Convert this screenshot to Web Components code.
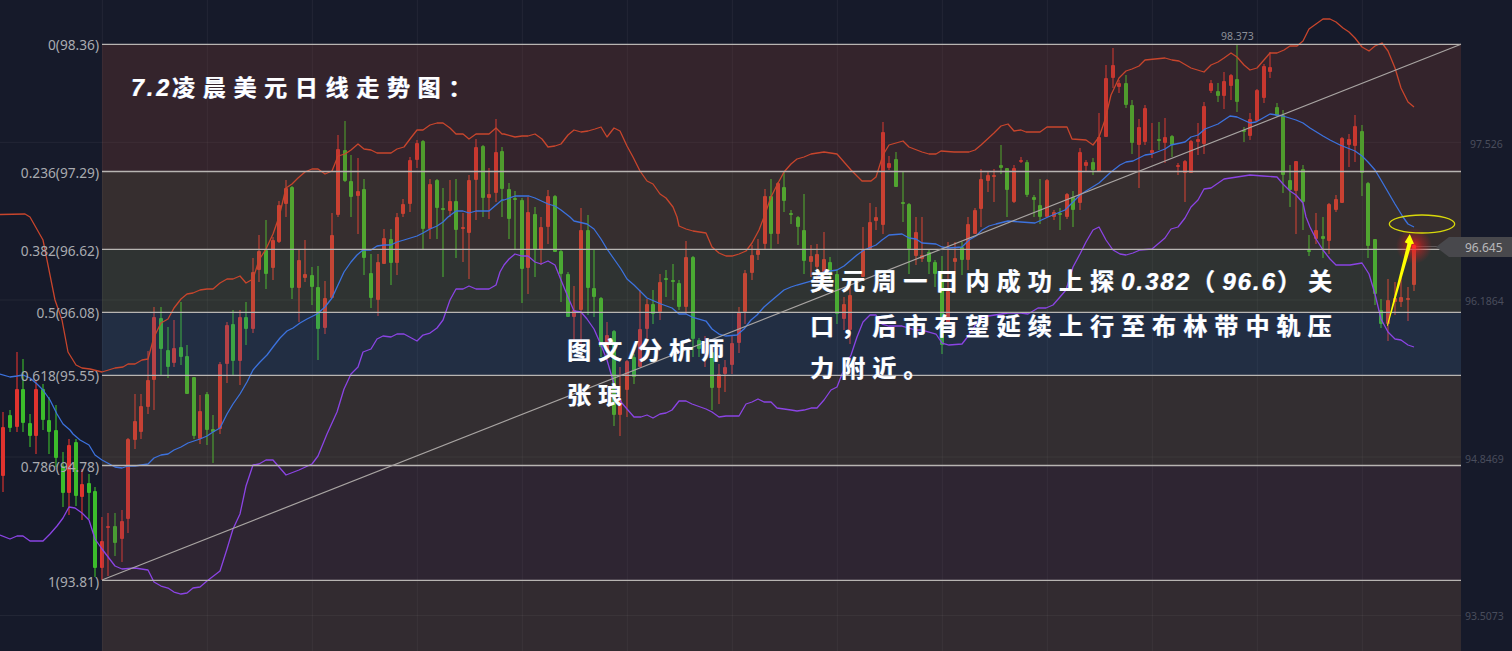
<!DOCTYPE html>
<html lang="zh">
<head>
<meta charset="utf-8">
<title>7.2凌晨美元日线走势图</title>
<style>
html,body{margin:0;padding:0;background:#161a2a;overflow:hidden}
fib-chart{--note-font:"Noto Sans CJK SC","Liberation Sans",sans-serif}
</style>
</head>
<body>
<fib-chart>
  <chart-note style="left:131px;top:65px" size="23" gap="7.7" igap="3"><i>7.2</i>凌晨美元日线走势图：</chart-note>
  <chart-note style="left:810px;top:259px">美元周一日内成功上探<i>0.382</i>（<i>96.6</i>）关<br>口，后市有望延续上行至布林带中轨压<br>力附近。</chart-note>
  <chart-note style="left:567px;top:328px">图文<i>/</i>分析师<br>张琅</chart-note>
</fib-chart>

<script>
/* candles: x, high, bodyTop, bodyBottom, low, colour (r/g) */
const CANDLES = `3,412,427,476,492,r 10,410,415,428,432,g 17,352,389,427,432,r 23,359,389,423,432,g 30,414,423,436,447,g 36,380,389,436,454,r 43,384,389,420,430,g 49,397,420,432,454,g 56,405,430,458,467,g 63,452,466,493,507,g 69,439,445,493,515,r 76,439,442,496,506,g 82,469,484,497,520,r 89,474,483,493,519,g 95,487,491,568,577,g 102,517,541,568,580,r 108,513,526,528,576,r 115,513,526,543,556,g 122,510,521,539,562,r 128,438,439,519,533,r 135,394,421,440,449,r 141,394,406,432,439,r 148,351,380,407,414,r 154,307,317,380,410,r 161,307,318,349,376,g 168,327,350,367,378,g 174,320,348,363,367,r 181,302,347,357,365,g 187,345,356,394,394,g 194,377,377,436,439,g 200,395,411,439,444,r 207,392,394,430,445,g 213,415,429,432,463,g 220,362,364,429,434,r 227,322,325,364,383,r 233,310,324,361,375,g 240,310,317,361,385,r 246,302,317,329,345,g 253,258,272,329,333,r 259,235,251,270,282,r 266,220,250,274,289,g 273,237,240,268,280,r 279,201,205,242,243,r 286,180,188,204,217,r 292,186,187,288,299,g 299,250,260,288,322,r 305,240,274,278,282,r 312,267,275,287,305,g 318,266,287,329,360,g 325,281,298,328,334,r 332,213,235,298,298,r 338,135,149,215,217,r 345,121,150,181,182,g 351,155,181,197,217,g 358,158,191,196,234,r 364,179,189,258,275,g 371,254,273,298,308,g 378,254,262,300,316,r 384,229,238,264,264,r 391,229,239,263,285,g 397,213,217,263,275,r 403,199,204,214,217,r 410,157,160,204,212,r 417,140,143,160,168,r 423,140,141,229,249,g 430,179,184,229,239,r 437,179,180,208,239,g 443,188,208,210,277,g 450,180,201,211,217,r 456,179,201,230,258,g 463,213,227,229,262,r 469,175,180,233,279,r 476,139,147,180,220,r 483,145,146,198,217,g 489,168,194,198,219,r 496,119,152,193,202,r 502,147,151,189,217,g 509,183,189,219,239,g 515,191,198,200,250,g 522,198,200,269,303,g 528,197,212,268,294,r 535,207,214,250,277,g 541,217,227,250,265,r 548,190,196,227,244,r 555,195,196,252,252,g 561,250,251,274,302,g 568,272,274,317,317,g 574,286,310,317,340,r 581,208,230,310,344,r 588,215,230,288,315,g 594,249,288,297,317,g 601,297,298,347,357,g 607,322,335,350,360,r 614,330,331,415,426,g 620,367,400,415,436,r 627,360,361,390,417,r 634,354,357,377,384,g 640,290,329,367,367,r 647,299,304,329,339,r 653,290,304,314,324,g 660,274,282,312,320,r 666,270,278,280,297,g 673,264,280,282,300,g 679,280,283,307,310,g 686,241,257,307,314,r 693,256,257,339,357,g 699,338,340,349,357,g 705,336,344,352,367,r 712,350,352,388,410,g 719,364,374,388,404,r 725,360,367,374,392,r 732,335,343,365,374,r 739,307,312,343,353,r 745,270,273,312,324,r 752,245,255,273,280,r 758,239,250,255,260,r 765,189,196,244,250,r 771,179,196,234,249,g 778,182,183,234,244,r 784,172,187,201,212,g 791,210,213,215,224,g 798,216,217,227,245,g 804,194,230,261,274,g 811,245,256,262,277,r 817,244,254,267,280,r 824,232,259,272,280,r 830,257,262,274,280,g 837,270,274,314,324,g 844,297,304,319,330,r 850,287,295,330,344,r 863,227,250,277,277,r 870,203,222,249,249,r 876,207,217,221,230,r 883,122,132,225,234,r 889,156,163,168,170,r 896,152,159,187,187,g 903,172,202,204,222,g 909,203,204,249,274,g 916,217,232,256,265,r 922,217,255,259,262,r 929,249,252,262,274,g 935,260,262,274,287,g 942,256,280,345,354,g 948,242,291,324,324,r 955,242,258,262,274,r 962,242,247,260,275,g 968,217,224,260,270,r 975,208,210,234,234,r 981,169,179,209,227,r 988,172,175,181,192,r 994,169,175,177,202,r 1001,145,165,168,174,g 1007,168,168,190,217,g 1014,165,168,202,203,r 1021,157,160,162,163,r 1027,160,162,195,197,g 1034,195,197,200,217,g 1040,179,205,217,224,g 1047,179,180,217,217,r 1054,210,212,217,220,r 1060,208,213,215,230,g 1067,193,194,217,219,r 1073,191,197,210,227,g 1080,148,152,203,210,r 1086,160,162,166,171,r 1093,158,162,170,175,g 1099,113,137,172,172,r 1106,65,78,137,137,r 1113,48,65,78,88,r 1119,80,83,87,93,r 1126,75,83,105,108,g 1132,100,105,143,154,g 1139,119,127,145,188,r 1145,105,108,142,145,r 1152,123,150,153,158,r 1159,122,139,141,150,g 1165,118,137,143,163,r 1172,135,136,145,157,g 1178,163,165,166,175,r 1185,160,161,173,202,r 1191,140,141,173,173,r 1198,123,139,142,155,r 1204,102,106,144,154,r 1211,80,83,91,93,r 1218,83,91,96,102,g 1224,72,81,96,109,r 1231,74,75,86,100,r 1237,44,79,102,112,g 1244,127,130,132,142,g 1250,113,119,136,140,r 1257,89,90,121,122,r 1264,64,66,98,103,r 1270,52,67,72,78,r 1277,103,107,116,117,g 1283,110,115,175,193,g 1290,165,180,190,207,g 1296,161,161,191,234,r 1303,165,169,202,230,g 1309,235,250,252,256,g 1316,213,230,239,244,r 1323,217,236,239,258,g 1329,203,204,241,254,r 1336,195,199,210,212,r 1342,137,138,203,203,r 1349,134,139,145,167,r 1355,115,126,146,162,r 1362,125,131,173,196,g 1368,182,183,246,258,g 1375,239,239,294,305,g 1381,299,310,324,328,g 1388,279,300,324,341,r 1395,282,298,302,315,r 1401,278,297,302,307,r 1408,287,298,300,321,r 1414,245,246,285,291,r`;

const UPPER = `0,214.5 25,214 30,217 43,240 45,250 55,300 62,320 68,352 76,365 82,368 90,369 102,372 115,368 123,367 128,364 135,364 142,360 148,359 154,337 161,323 168,319 174,308 181,299 187,294 193,293 200,290 207,289 213,289 220,283 227,279 233,279 240,276 246,283 253,279 259,260 266,249 273,234 279,217 286,188 292,184 298,178 305,172 312,169 318,169 325,174 332,171 338,156 345,154 351,150 358,144 364,149 371,150 377,153 384,153 391,153 397,149 404,147 410,139 417,130 423,130 430,125 437,123 443,123 450,128 456,134 463,134 469,139 476,134 483,134 489,134 496,128 502,134 504,134 515,137 522,136 528,136 535,134 542,139 548,147 555,146 561,144 568,135 574,130 581,132 588,131 595,129 601,127 607,137 614,128 620,131 627,146 633,157 640,171 647,181 653,184 660,194 666,198 673,207 677,217 679,226 686,229 693,231 706,233 712,247 719,253 726,256 732,256 739,254 746,251 752,243 759,230 764,217 771,197 777,185 784,172 791,164 797,159 804,157 811,154 824,152 837,154 851,170 862,181 871,181 876,177 883,155 889,145 896,143 903,141 909,147 922,152 929,154 936,154 941,151 954,152 969,152 975,150 981,145 994,133 1001,126 1008,124 1014,131 1021,130 1026,132 1040,132 1047,127 1067,127 1072,139 1086,140 1093,145 1099,137 1105,120 1111,95 1119,78 1126,71 1132,69 1139,66 1145,60 1165,58 1172,60 1179,61 1191,68 1204,72 1211,65 1218,62 1224,58 1231,53 1237,57 1244,65 1250,70 1257,68 1270,53 1277,53 1284,50 1290,46 1297,46 1303,41 1309,29 1316,24 1323,19 1330,19 1336,22 1343,28 1349,32 1355,38 1362,47 1369,51 1375,46 1382,43 1388,51 1395,68 1401,88 1408,102 1414,107`;

const MID = `0,374 10,377 17,376 23,375 30,378 37,384 43,390 50,400 57,414 63,424 70,430 73,434 80,440 89,445 95,455 102,460 115,467 122,468 128,466 135,466 148,464 154,458 161,455 168,454 174,450 181,447 188,443 200,439 207,436 213,432 220,428 227,414 233,404 240,394 247,382 253,370 260,362 267,355 273,347 280,338 287,331 293,328 300,323 307,319 317,314 325,307 332,298 338,285 344,272 351,262 357,255 363,250 371,250 377,246 384,245 391,245 397,242 404,240 417,236 423,233 430,229 437,226 443,222 448,217 456,211 463,211 469,213 476,211 489,211 496,205 502,200 504,200 515,196 529,196 535,198 548,204 555,206 561,210 570,217 574,221 587,224 594,229 601,239 607,249 614,259 621,269 627,279 634,285 641,292 647,298 654,301 661,304 672,308 679,314 686,314 692,317 706,321 712,329 719,334 726,336 737,335 744,329 751,320 757,315 764,307 771,301 784,290 791,287 797,285 811,281 824,272 837,270 844,266 857,255 864,250 876,245 882,240 889,235 902,234 909,238 916,239 922,243 936,244 942,247 949,248 962,247 969,240 976,236 982,230 989,226 996,224 1008,221 1021,222 1035,223 1048,217 1065,210 1073,202 1080,195 1086,191 1099,183 1111,172 1120,165 1126,162 1133,161 1145,155 1152,154 1165,149 1171,145 1185,142 1191,137 1198,135 1205,129 1218,124 1230,116 1237,117 1250,123 1256,122 1270,114 1283,116 1296,120 1303,123 1310,128 1323,136 1330,140 1340,145 1355,151 1362,156 1368,162 1375,170 1381,180 1388,192 1395,204 1403,217 1408,224 1414,227`;

const LOWER = `0,535 10,539 17,536 23,536 30,541 43,541 50,534 57,526 63,518 69,507 75,508 82,513 89,520 95,539 102,549 115,566 122,569 135,568 148,570 154,582 161,586 168,588 174,592 181,594 187,593 193,588 200,587 207,581 220,571 227,549 233,529 240,514 246,486 253,465 259,464 266,460 273,460 286,475 299,470 312,464 318,456 327,434 337,412 344,389 351,374 358,367 363,352 371,349 377,339 383,336 391,337 397,334 404,334 417,341 423,335 430,333 437,328 443,320 450,300 456,289 463,289 469,286 476,289 489,289 496,285 500,272 504,265 509,259 515,254 522,256 528,256 535,262 541,264 548,261 555,265 561,280 568,297 574,311 581,312 587,319 594,329 601,345 607,360 614,384 621,402 627,409 634,417 641,417 647,415 653,418 660,414 666,413 672,410 679,401 686,401 692,404 706,409 712,412 719,417 726,416 739,416 746,404 752,402 758,399 764,402 771,402 777,408 791,410 797,411 804,410 811,408 817,408 824,400 831,390 837,387 844,369 851,355 857,337 863,322 870,315 876,315 882,324 889,326 902,326 916,330 922,330 936,334 942,343 949,345 962,344 969,335 976,324 982,317 1008,313 1021,313 1028,314 1038,308 1046,308 1053,305 1060,297 1066,290 1073,267 1080,254 1086,242 1093,230 1099,227 1106,240 1113,250 1120,254 1126,255 1133,253 1140,250 1152,249 1165,238 1171,229 1178,227 1185,218 1191,207 1198,200 1204,189 1211,188 1224,179 1237,177 1250,175 1263,176 1277,177 1283,184 1290,191 1296,195 1303,203 1306,217 1310,227 1316,239 1323,250 1330,259 1336,265 1350,265 1362,263 1369,274 1375,294 1381,319 1388,332 1395,339 1401,340 1408,345 1414,347`;

const BG = [22,26,42];
const FIB = [[0,'0(98.36)',44.3],[.236,'0.236(97.29)',171.5],[.382,'0.382(96.62)',249.4],[.5,'0.5(96.08)',312.3],[.618,'0.618(95.55)',375.3],[.786,'0.786(94.78)',465.5],[1,'1(93.81)',580.4]];
const BANDS = [[44.3,171.5,[52,37,45]],[171.5,249.4,[54,47,47]],[249.4,312.3,[47,52,51]],[312.3,375.3,[34,47,67]],[375.3,465.5,[51,47,50]],[465.5,580.4,[46,38,51]],[580.4,651,[50,44,49]]];
const overlay = c => { const a=.27; return `rgba(${c.map((v,i)=>Math.max(0,Math.min(255,Math.round(BG[i]+(v-BG[i])/a)))).join(',')},${a})`; };

class AxisLabel extends HTMLElement {
  constructor(){ super(); this.attachShadow({mode:'open'}).innerHTML =
    `<style>:host{position:absolute;display:block;white-space:nowrap;line-height:1;font-family:"Noto Sans","Liberation Sans",sans-serif}</style><slot></slot>`; }
}
customElements.define('axis-label', AxisLabel);

class ChartNote extends HTMLElement {
  constructor(){ super(); this.attachShadow({mode:'open'}).innerHTML = `<style>
    :host{position:absolute;display:block;white-space:nowrap;color:#fff;font-weight:700;
      font-family:var(--note-font);font-size:var(--s,24px);letter-spacing:var(--g,7.1px);line-height:42.5px;
      text-shadow:-.7px 0 0 rgba(70,120,220,.55),.5px .4px 0 rgba(255,255,255,.7)}
    ::slotted(i){font-family:"Liberation Sans",sans-serif;font-style:italic;letter-spacing:var(--ig,2px)}
  </style><slot></slot>`; }
  connectedCallback(){
    if(this.hasAttribute('size')) this.style.setProperty('--s',this.getAttribute('size')+'px');
    if(this.hasAttribute('gap')) this.style.setProperty('--g',this.getAttribute('gap')+'px');
    if(this.hasAttribute('igap')) this.style.setProperty('--ig',this.getAttribute('igap')+'px');
  }
}
customElements.define('chart-note', ChartNote);

class FibChart extends HTMLElement {
  constructor(){
    super();
    const root = this.attachShadow({mode:'open'});
    const W=1512,H=651,L=102,R=1461;
    let grid='';
    for(let x=102;x<R;x+=105) grid+=`<line x1="${x+.3}" x2="${x+.3}" y1="0" y2="${H}"/>`;
    for(const y of [142.3,300,457,615.5]) grid+=`<line x1="0" x2="${R}" y1="${y}" y2="${y}"/>`;
    let wicks={r:'',g:''},bodies={r:'',g:''};
    CANDLES.trim().split(/\s+/).forEach(s=>{
      const p=s.split(','),[x,h,t,b,l]=p.map(Number),c=p[5];
      wicks[c]+=`M${x} ${h}V${l}`;
      bodies[c]+=`<rect x="${x-2}" y="${t}" width="4" height="${Math.max(b-t,2)}" rx="1"/>`;
    });
    const bands=BANDS.map(([a,b,c])=>`<rect x="${L}" y="${a}" width="${R-L}" height="${b-a}" fill="${overlay(c)}"/>`).join('');
    const fib=FIB.map(f=>`<line x1="${L}" x2="${R}" y1="${f[2]}" y2="${f[2]}"/>`).join('');
    root.innerHTML=`<style>
      :host{position:relative;display:block;width:${W}px;height:${H}px;overflow:hidden;background:#161a2a}
      svg{position:absolute;inset:0;display:block}
      .grid line{stroke:#fff;stroke-opacity:.055;stroke-width:1}
      .wick{fill:none;stroke-width:1.8;stroke-opacity:.62}
      .r{stroke:#e0332e;fill:#e0332e}.g{stroke:#3cbc2b;fill:#3cbc2b}
      .bodies rect{stroke:none}
      .boll{fill:none;stroke-width:1.3;stroke-linejoin:round}
      .fib line{stroke:#b8b5b2;stroke-width:1.3}
    </style>
    <svg width="${W}" height="${H}" viewBox="0 0 ${W} ${H}" aria-hidden="true">
      <defs><radialGradient id="glow"><stop offset="0" stop-color="#ff1f1f" stop-opacity=".85"/><stop offset=".45" stop-color="#e81e1e" stop-opacity=".4"/><stop offset="1" stop-color="#e81e1e" stop-opacity="0"/></radialGradient></defs>
      <g class="grid">${grid}</g>
      <path class="wick r" d="${wicks.r}"/><path class="wick g" d="${wicks.g}"/>
      <g class="bodies r">${bodies.r}</g><g class="bodies g">${bodies.g}</g>
      <g>${bands}</g>
      <polyline class="boll" stroke="#c8452c" points="${UPPER}"/>
      <polyline class="boll" stroke="#3c72de" points="${MID}"/>
      <polyline class="boll" stroke="#8b44e4" points="${LOWER}"/>
      <g class="fib">${fib}</g>
      <line x1="${L}" y1="580" x2="${R}" y2="44.3" stroke="#a8a4a2" stroke-width="1.2"/>
      <line x1="1414" y1="246.5" x2="1440" y2="246.5" stroke="#fff" stroke-opacity=".22"/>
      <polygon points="1436,247 1449,237 1512,237 1512,257 1449,257" fill="#48484c"/>
      <circle cx="1414" cy="246" r="18" fill="url(#glow)"/>
      <circle cx="1414" cy="246.5" r="2" fill="#ff2a2a"/>
      <ellipse cx="1422" cy="224" rx="32.7" ry="9" fill="none" stroke="#d8d80a" stroke-width="1.3"/>
      <polygon points="1387,325.5 1407.4,243.5 1404.7,242.3 1409.8,234 1414,243.8 1411.6,243.9 1387.8,326" fill="#ffff00"/>
    </svg>
    <slot></slot><slot name="axis"></slot>`;
    const add=(txt,css)=>{const e=document.createElement('axis-label');e.slot='axis';e.textContent=txt;e.style.cssText=css;this.appendChild(e);};
    FIB.forEach(f=>add(f[1],`right:${W-99}px;top:${f[2]-5.85}px;font-size:13.7px;color:#a9abb0`));
    add('98.373','left:1221px;top:31px;font-size:10.5px;color:#8c8f97');
    add('96.645','left:1465px;top:241.5px;font-size:12px;color:#b8b8bb');
    [['97.526',1470,139],['96.1864',1465,296],['94.8469',1465,454],['93.5073',1465,611]].forEach(([t,x,y])=>add(t,`left:${x}px;top:${y}px;font-size:10.5px;color:#494d5c`));
  }
}
customElements.define('fib-chart', FibChart);
</script>
</body>
</html>
